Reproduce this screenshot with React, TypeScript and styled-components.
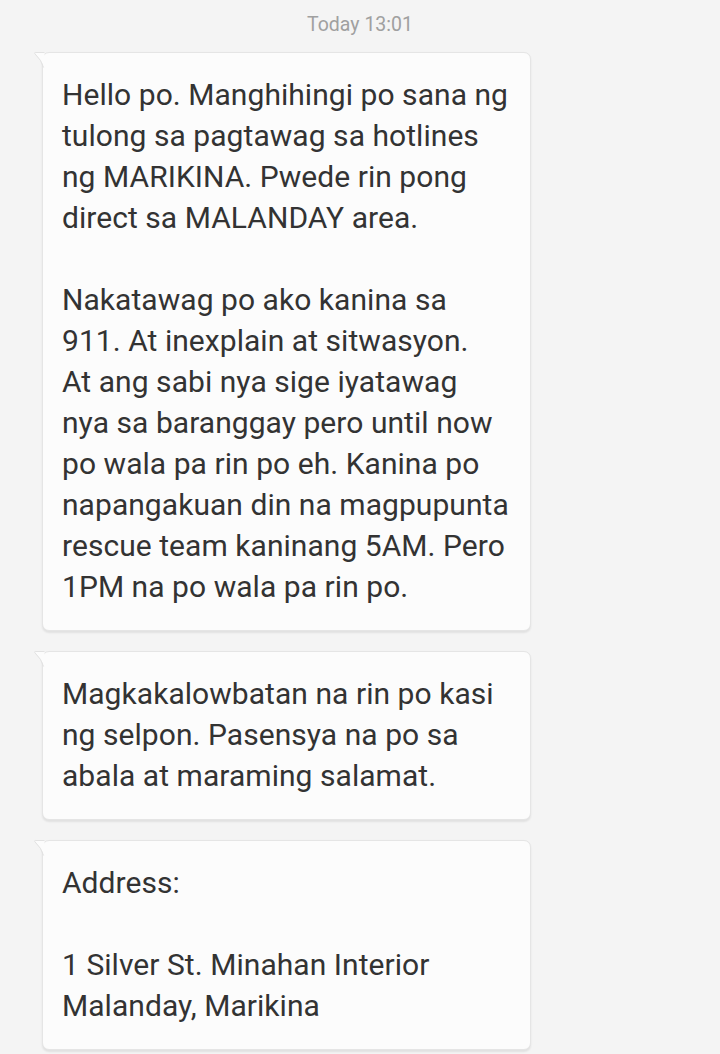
import React from "react";
import styled, { createGlobalStyle } from "styled-components";

const Global = createGlobalStyle`
  html, body { margin: 0; padding: 0; background: #f4f4f4; }
  body { font-family: Roboto, "Noto Sans", "Liberation Sans", sans-serif; -webkit-font-smoothing: antialiased; }
`;

const Screen = styled.div`
  width: 720px;
  min-height: 1054px;
  background: #f4f4f4;
  display: flex;
  flex-direction: column;
  padding: 10px 0 0 42px;
  box-sizing: border-box;
`;

const Stamp = styled.div`
  width: 636px;
  text-align: center;
  font-size: 19.5px;
  line-height: 30px;
  color: #a0a0a0;
  height: 42px;
`;

const List = styled.div`
  display: flex;
  flex-direction: column;
  gap: 20px;
`;

const Bubble = styled.div`
  position: relative;
  width: 489px;
  box-sizing: border-box;
  background: #fcfcfc;
  border: 1px solid #e5e5e5;
  border-radius: 7px;
  box-shadow: 0 1.5px 2px rgba(0, 0, 0, 0.08);
  padding: 21px 10px 23px 19px;
  color: #333333;
  font-size: 30px;
  line-height: 41px;
  white-space: pre-line;
  letter-spacing: 0.05px;
`;

const Tail = styled.svg`
  position: absolute;
  left: -9px;
  top: -1px;
  width: 11px;
  height: 16px;
  overflow: visible;
`;

const messages = [
  `Hello po. Manghihingi po sana ng
tulong sa pagtawag sa hotlines
ng MARIKINA. Pwede rin pong
direct sa MALANDAY area.

Nakatawag po ako kanina sa
911. At inexplain at sitwasyon.
At ang sabi nya sige iyatawag
nya sa baranggay pero until now
po wala pa rin po eh. Kanina po
napangakuan din na magpupunta
rescue team kaninang 5AM. Pero
1PM na po wala pa rin po.`,
  `Magkakalowbatan na rin po kasi
ng selpon. Pasensya na po sa
abala at maraming salamat.`,
  `Address:

1 Silver St. Minahan Interior
Malanday, Marikina`,
];

export default function App() {
  return (
    <>
      <Global />
      <Screen>
        <Stamp>Today 13:01</Stamp>
        <List>
          {messages.map((m, i) => (
            <Bubble key={i}>
              <Tail viewBox="0 0 11 16">
                <path d="M10.5 0.5 L1.2 0.5 Q0.2 0.6 0.8 1.6 Q7.5 8 10 15.5 L10.5 15.5 Z" fill="#fcfcfc" />
                <path d="M10.5 0.5 L1.2 0.5 Q0.2 0.6 0.8 1.6 Q7.5 8 9.6 15.5" fill="none" stroke="#e2e2e2" strokeWidth="1" />
              </Tail>
              {m}
            </Bubble>
          ))}
        </List>
      </Screen>
    </>
  );
}
